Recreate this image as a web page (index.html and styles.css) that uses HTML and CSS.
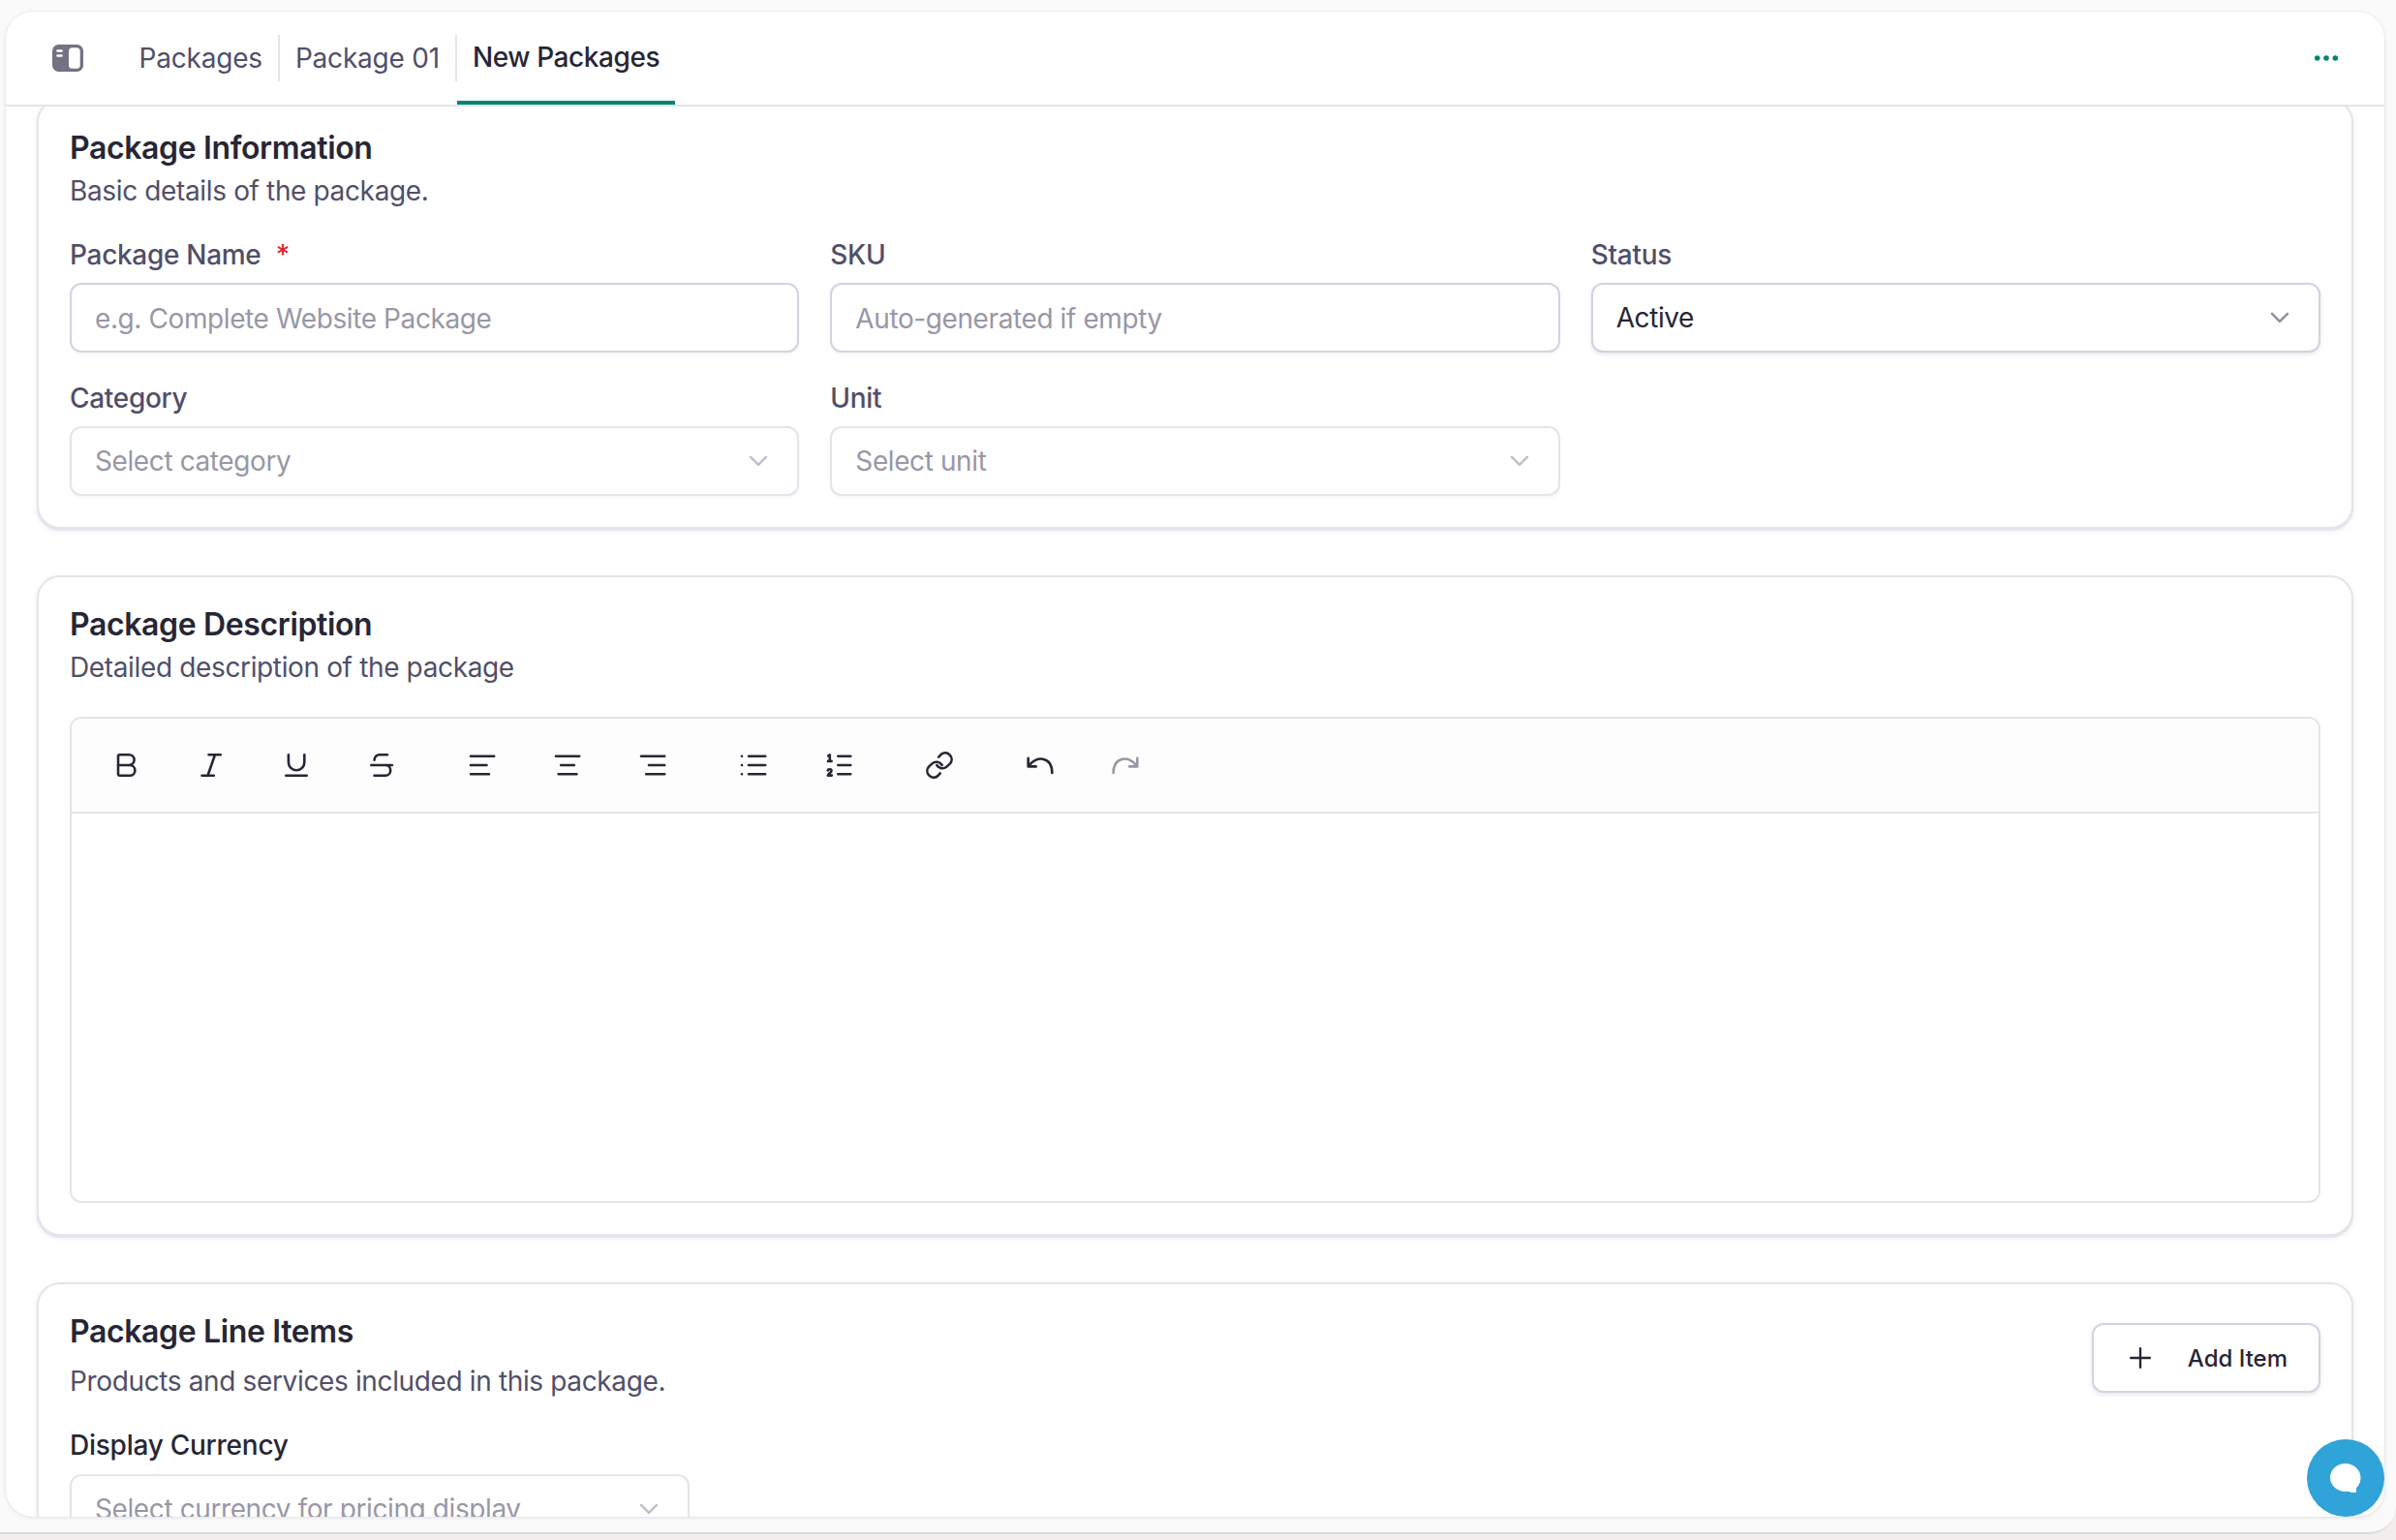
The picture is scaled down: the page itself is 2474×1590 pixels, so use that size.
FILE: index.html
```html
<!DOCTYPE html>
<html lang="en">
<head>
<meta charset="utf-8">
<title>New Packages</title>
<link rel="stylesheet" href="styles.css">
</head>
<body>
<div class="window">
  <div class="panel">
    <header class="topbar">
      <svg class="sidebar-toggle" width="32" height="28" viewBox="0 0 32 28" aria-hidden="true">
        <rect class="toggle-frame" width="32" height="28" rx="6.500"/>
        <rect class="toggle-pane" x="17" y="3.300" width="11.700" height="21.400" rx="3.500"/>
        <path class="toggle-lines" d="M5.500 6.500h4M5.500 11.500h4"/>
      </svg>
      <nav class="tabs">
        <a class="tab">Packages</a>
        <a class="tab">Package 01</a>
        <a class="tab tab-active">New Packages</a>
      </nav>
      <svg class="more" width="26" height="8" viewBox="0 0 26 8" aria-hidden="true"><circle cx="3.700" cy="4" r="2.800"/><circle cx="13" cy="4" r="2.800"/><circle cx="22.300" cy="4" r="2.800"/></svg>
    </header>

    <main class="content">
      <section class="card">
        <h2 class="card-title">Package Information</h2>
        <p class="card-sub">Basic details of the package.</p>
        <div class="fields">
          <div class="field">
            <span class="label">Package Name <span class="required">*</span></span>
            <div class="control input"><span>e.g. Complete Website Package</span></div>
          </div>
          <div class="field">
            <span class="label">SKU</span>
            <div class="control input"><span>Auto-generated if empty</span></div>
          </div>
          <div class="field">
            <span class="label">Status</span>
            <div class="control filled"><span>Active</span><svg class="chevron" width="20" height="12" viewBox="0 0 20 12"><path d="M2 1.800l8 8 8-8"/></svg></div>
          </div>
          <div class="field">
            <span class="label">Category</span>
            <div class="control select"><span>Select category</span><svg class="chevron" width="20" height="12" viewBox="0 0 20 12"><path d="M2 1.800l8 8 8-8"/></svg></div>
          </div>
          <div class="field">
            <span class="label">Unit</span>
            <div class="control select"><span>Select unit</span><svg class="chevron" width="20" height="12" viewBox="0 0 20 12"><path d="M2 1.800l8 8 8-8"/></svg></div>
          </div>
        </div>
      </section>

      <section class="card">
        <h2 class="card-title">Package Description</h2>
        <p class="card-sub">Detailed description of the package</p>
        <div class="editor">
          <div class="toolbar">
            <div class="group">
              <span class="tool"><svg viewBox="0 0 36 36"><path d="M10 18h12a5.400 5.400 0 0 1 0 10.800H11.500A1.500 1.500 0 0 1 10 27.300V8.700A1.500 1.500 0 0 1 11.500 7.200h9.700a5.400 5.400 0 0 1 0 10.800"/></svg></span>
              <span class="tool"><svg viewBox="0 0 36 36"><path d="M15.500 7.200h12.300M8.500 28.800h12.300M22 7.200l-7.500 21.600"/></svg></span>
              <span class="tool"><svg viewBox="0 0 36 36"><path d="M9.900 7.200v7.900a8.200 8.200 0 0 0 16.400 0V7.200M7.300 28.800h21.400"/></svg></span>
              <span class="tool"><svg viewBox="0 0 36 36"><path d="M24 7.200h-8.200a5.200 5.200 0 0 0-5.200 5.400M7.300 18h21.600M21 18h1a5.200 5.400 0 0 1 0 10.800H10.500"/></svg></span>
            </div>
            <div class="group">
              <span class="tool"><svg viewBox="0 0 36 36"><path d="M6 8.700h24.200M6 18h16.500M6 27.300h19"/></svg></span>
              <span class="tool"><svg viewBox="0 0 36 36"><path d="M6 8.700h24.200M11.200 18h13.600M8.700 27.300h18.800"/></svg></span>
              <span class="tool"><svg viewBox="0 0 36 36"><path d="M6 8.700h24.200M14 18h16.200M11.200 27.300h19"/></svg></span>
            </div>
            <div class="group">
              <span class="tool"><svg viewBox="0 0 36 36"><path d="M13 8.700h17.200M13 18h17.200M13 27.300h17.200M6 8.700h.02M6 18h.02M6 27.300h.02"/></svg></span>
              <span class="tool"><svg viewBox="0 0 36 36"><path d="M17.300 8.700h13M17.300 18h13M17.300 27.300h13M7.200 8.400l1.600-1v6.400M7 13.900h3.600M6.800 23.500c.2-1.700 3.800-1.700 3.700.4 0 1.600-2.500 2.300-3.700 4.700h4"/></svg></span>
            </div>
            <div class="group">
              <span class="tool"><svg viewBox="0 0 36 36"><path d="M17.200 9.600L20 6.600A6.700 6.700 0 0 1 29 16.400L25.500 19.600A6.700 6.700 0 0 1 15.300 18M18.800 26.400L16 29.400A6.700 6.700 0 0 1 7 19.600L10.500 16.400A6.700 6.700 0 0 1 20.700 18"/></svg></span>
            </div>
            <div class="group">
              <span class="tool"><svg viewBox="0 0 36 36"><path d="M5.700 10.800v8.600h8M6.300 18.600C13.500 8 30 8.500 30.400 26"/></svg></span>
              <span class="tool disabled"><svg viewBox="0 0 36 36"><path d="M30.300 10.800v8.600h-8M29.700 18.600C22.500 8 6 8.500 5.600 26"/></svg></span>
            </div>
          </div>
          <div class="editor-body"></div>
        </div>
      </section>

      <section class="card">
        <div class="items-head">
          <div class="items-text">
            <h2 class="card-title">Package Line Items</h2>
            <p class="card-sub">Products and services included in this package.</p>
          </div>
          <button class="add"><svg width="24" height="24" viewBox="0 0 24 24"><path d="M12 2.200v19.600M2.200 12h19.600"/></svg><span>Add Item</span></button>
        </div>
        <span class="label label-dark">Display Currency</span>
        <div class="control select currency"><span>Select currency for pricing display</span><svg class="chevron" width="20" height="12" viewBox="0 0 20 12"><path d="M2 1.800l8 8 8-8"/></svg></div>
      </section>
    </main>
  </div>
  <div class="chat">
    <svg width="34" height="32" viewBox="0 0 34 32"><path d="M16.700 1C25.500 1 32.500 7.500 32.500 15.500c0 4.500-1.500 8-4.500 10.700V31h-5.500l-2-1.200c-1.200.2-2.500.2-3.800.2C8 30 1 23.500 1 15.500S8 1 16.700 1z"/></svg>
  </div>
</div>
</body>
</html>
```
FILE: styles.css
```css
* { box-sizing: border-box; margin: 0; padding: 0; }

body {
  width: 2474px;
  height: 1590px;
  overflow: hidden;
  background: #f0efed;
  font-family: Inter, "Liberation Sans", sans-serif;
  font-size: 28px;
  letter-spacing: -.36px;
  color: #272635;
}

.window {
  position: relative;
  height: 1584px;
  padding: 12px 12px 16px 6px;
  background: #fafafa;
  border-bottom: 2px solid #dadad8;
  border-bottom-right-radius: 28px;
}

.panel {
  display: flex;
  flex-direction: column;
  height: 1554px;
  background: #fff;
  border-radius: 28px;
  overflow: hidden;
  box-shadow: 0 0 0 1px rgba(0, 0, 0, .025), 0 1px 5px rgba(0, 0, 0, .09);
}

.topbar {
  display: flex;
  align-items: center;
  flex: none;
  height: 98px;
  padding: 0 47px 0 48px;
  border-bottom: 2px solid #e4e4ec;
}

.sidebar-toggle { flex: none; }
.toggle-frame { fill: #737182; }
.toggle-pane { fill: #fff; }
.toggle-lines { stroke: #fff; stroke-width: 2.600px; stroke-linecap: round; }

.tabs { display: flex; align-items: center; height: 96px; margin-left: 41.500px; }

.tab {
  display: flex;
  align-items: center;
  height: 48px;
  padding: 0 16px;
  border-right: 2px solid #e4e4ec;
  color: #514f69;
  letter-spacing: -.2px;
  white-space: nowrap;
}

.tab-active {
  height: 96px;
  padding-top: 2px;
  border-right: 0;
  border-bottom: 4px solid #008573;
  color: #272635;
  font-weight: 500;
  letter-spacing: -.42px;
}

.more { margin-left: auto; fill: #008573; }

.content {
  display: flex;
  flex-direction: column;
  gap: 48px;
  flex: 1;
  min-height: 0;
  margin-top: -8px;
  padding: 0 32px;
  clip-path: inset(8px 0 0 0);
}

.card {
  flex: none;
  padding: 32px;
  background: #fff;
  border: 2px solid #e4e4ec;
  border-radius: 24px;
  box-shadow: 0 2px 0 #e4e4ec, 0 2px 6px rgba(0, 0, 0, .08);
}

.card-title { font-size: 32px; line-height: 34px; font-weight: 600; letter-spacing: -.37px; }
.card-sub { margin-top: 7px; line-height: 40px; color: #514f69; }

.fields {
  display: grid;
  grid-template-columns: repeat(3, 1fr);
  gap: 27px 32px;
  margin-top: 26px;
}

.field { display: flex; flex-direction: column; gap: 9px; }
.label { display: block; line-height: 40px; font-weight: 500; color: #514f69; letter-spacing: -.3px; white-space: pre; }
.label-dark { color: #272635; }
.required { margin-left: 8px; color: #e5242e; }

.control {
  display: flex;
  align-items: center;
  justify-content: space-between;
  height: 72px;
  padding: 0 30px 0 24px;
  background: #fff;
  border: 2px solid #d4d2e3;
  border-radius: 12px;
  color: #9897a6;
  letter-spacing: -.4px;
  white-space: nowrap;
  box-shadow: 0 2px 3px rgba(0, 0, 0, .04);
}

.input { padding-top: 2px; }
.filled { color: #272635; box-shadow: 0 2px 4px rgba(0, 0, 0, .1); }
.select { border-color: #e4e4ec; }
.chevron { fill: none; stroke: #9190a0; stroke-width: 2.500px; stroke-linecap: round; stroke-linejoin: round; }
.select .chevron { stroke: #c0bfcb; }

.editor { height: 502px; margin-top: 31px; border: 2px solid #e4e4ec; border-radius: 12px; overflow: hidden; }

.toolbar {
  display: flex;
  gap: 24px;
  height: 98px;
  padding: 16px;
  background: #fdfdfd;
  border-bottom: 2px solid #e4e4ec;
}

.group { display: flex; gap: 8px; }
.tool { display: flex; align-items: center; justify-content: center; width: 80px; height: 64px; }
.tool svg { width: 36px; height: 36px; fill: none; stroke: #272635; stroke-width: 2.600px; stroke-linecap: round; stroke-linejoin: round; }
.disabled svg { stroke: #9897a6; }

.items-head { display: flex; justify-content: space-between; align-items: center; height: 88px; }
.items-head .card-sub { margin-top: 14px; }
.items-text { height: 88px; }

.add {
  display: flex;
  align-items: center;
  justify-content: space-between;
  width: 236px;
  height: 72px;
  padding: 0 32px 0 36px;
  background: #fff;
  border: 2px solid #d4d2e3;
  border-radius: 12px;
  box-shadow: 0 2px 4px rgba(0, 0, 0, .1);
  color: #272635;
  font: 500 24px Inter, "Liberation Sans", sans-serif;
}

.add svg { fill: none; stroke: #272635; stroke-width: 2.400px; stroke-linecap: round; }

.items-head + .label { margin-top: 26px; letter-spacing: -.25px; }
.currency { width: 640px; margin-top: 10px; }

.chat {
  position: absolute;
  right: 12px;
  bottom: 16px;
  display: flex;
  align-items: center;
  justify-content: center;
  width: 80px;
  height: 80px;
  border-radius: 50%;
  background: #30a3d8;
}

.chat svg { fill: #fff; }
```
